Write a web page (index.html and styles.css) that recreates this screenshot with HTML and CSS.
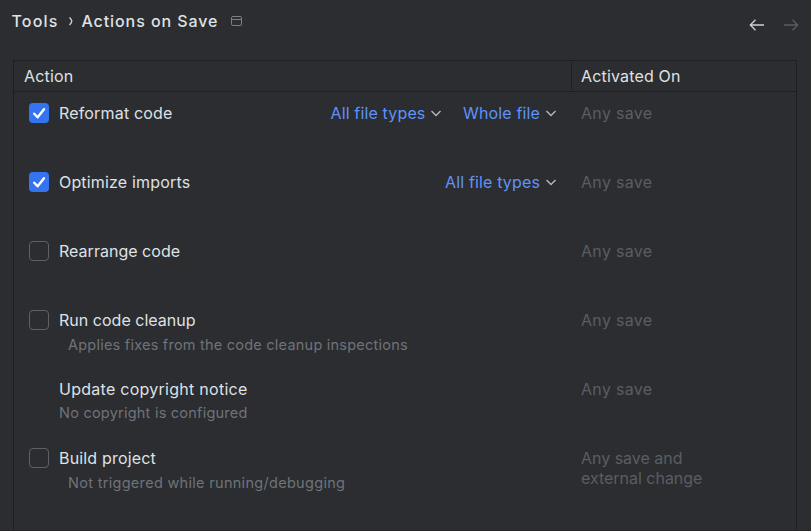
FILE: index.html
```html
<!DOCTYPE html>
<html lang="en">
<head>
<meta charset="utf-8">
<title>Actions on Save</title>
<link rel="stylesheet" href="styles.css">
</head>
<body>
<header class="topbar">
  <nav class="crumbs"><span class="crumb-root">Tools</span><svg class="sep" width="6" height="10" viewBox="0 0 6 10"><path d="M1.5 1.5C3 3 3.8 4 3.8 5S3 7.5 1.5 9"/></svg><span class="crumb-page">Actions on Save</span>
    <svg class="scope" width="12" height="11" viewBox="0 0 12 11"><rect x=".5" y=".5" width="10" height="9" rx="1.5"/><path d="M.5 3.5h10"/></svg>
  </nav>
  <div class="history">
    <svg width="16" height="14" viewBox="0 0 16 14"><path d="M15 7H1.5M6.5 1.8 1.3 7l5.2 5.2"/></svg>
    <svg class="off" width="16" height="14" viewBox="0 0 16 14"><path d="M1 7h13.5M9.5 1.8 14.7 7l-5.2 5.2"/></svg>
  </div>
</header>
<main class="table">
  <div class="head"><div class="cell-action">Action</div><div class="cell-on">Activated On</div></div>
  <div class="row">
    <div class="box on"><svg width="20" height="20" viewBox="0 0 20 20"><path d="m5.2 10.7 3.4 3.6 6.4-8"/></svg></div>
    <div class="name">Reformat code</div>
    <div class="links"><span class="link">All file types<svg width="10" height="7" viewBox="0 0 10 7"><path d="m.5 1 4.5 4.5L9.5 1"/></svg></span><span class="link">Whole file<svg width="10" height="7" viewBox="0 0 10 7"><path d="m.5 1 4.5 4.5L9.5 1"/></svg></span></div>
    <div class="when">Any save</div>
  </div>
  <div class="row">
    <div class="box on"><svg width="20" height="20" viewBox="0 0 20 20"><path d="m5.2 10.7 3.4 3.6 6.4-8"/></svg></div>
    <div class="name">Optimize imports</div>
    <div class="links"><span class="link">All file types<svg width="10" height="7" viewBox="0 0 10 7"><path d="m.5 1 4.5 4.5L9.5 1"/></svg></span></div>
    <div class="when">Any save</div>
  </div>
  <div class="row"><div class="box"></div><div class="name snug">Rearrange code</div><div class="when">Any save</div></div>
  <div class="row"><div class="box"></div><div class="name snug">Run code cleanup<p class="note inset">Applies fixes from the code cleanup inspections</p></div><div class="when">Any save</div></div>
  <div class="row"><div class="box none"></div><div class="name airy">Update copyright notice<p class="note">No copyright is configured</p></div><div class="when">Any save</div></div>
  <div class="row"><div class="box"></div><div class="name">Build project<p class="note inset wide">Not triggered while running/debugging</p></div><div class="when snug">Any save and<br>external change</div></div>
</main>
</body>
</html>
```
FILE: styles.css
```css
* { box-sizing: border-box; }
body {
  margin: 0;
  height: 531px;
  overflow: hidden;
  border-bottom: 1px solid #232427;
  background: #2b2d30;
  color: #dfe1e5;
  font: 16px/20px Inter, sans-serif;
  letter-spacing: .17px;
}
svg { fill: none; stroke: #ced0d6; flex: none; }
.topbar { height: 60px; display: flex; justify-content: space-between; padding: 11px 12px 0 11.5px; }
.crumbs { display: flex; align-items: center; height: 20px; font-weight: 500; letter-spacing: 1.15px; }
.crumb-page { letter-spacing: .92px; }
.sep { margin: 0 7px 0 10px; stroke-width: 1.4; }
.scope { margin: 1px 0 0 13px; stroke: #7c7f86; }
.history { display: flex; gap: 18px; padding-top: 7px; }
.history svg { stroke-width: 1.3; }
.history .off { stroke: #5a5d63; }
.table { width: 784px; height: 470px; margin-left: 13px; border: 1px solid #1e1f22; border-bottom: 0; }
.head { display: flex; align-items: center; height: 31px; line-height: 28px; border-bottom: 1px solid #1e1f22; }
.cell-action { width: 558px; padding-left: 10px; border-right: 1px solid #1e1f22; }
.cell-on { padding-left: 9px; }
.row { display: flex; height: 69px; padding: 11px 0 0 15px; }
.box { width: 20px; height: 20px; border: 1px solid #5f6167; border-radius: 4px; }
.box.on { background: #3574f0; border: 0; }
.box.on svg { display: block; stroke: #fff; stroke-width: 2.4; stroke-linecap: round; stroke-linejoin: round; }
.box.none { visibility: hidden; }
.name { margin-left: 10px; white-space: nowrap; }
.note { margin: 3.5px 0 0; color: #6f737a; font-size: 14.5px; letter-spacing: .23px; }
.inset { margin-top: 5px; padding-left: 9px; }
.links { display: flex; gap: 21.5px; margin-left: auto; color: #5f93fa; letter-spacing: .15px; }
.link { display: flex; height: 20px; align-items: center; gap: 6px; }
.link svg { stroke: #b4b8bf; stroke-width: 1.4; }
.when { width: 215px; margin-left: 25px; color: #5a5d63; letter-spacing: .32px; }
.name + .when { margin-left: auto; }
.snug { letter-spacing: .02px; }
.when.snug { letter-spacing: -.02px; }
.airy { letter-spacing: .27px; }
.wide { letter-spacing: .3px; }
```
